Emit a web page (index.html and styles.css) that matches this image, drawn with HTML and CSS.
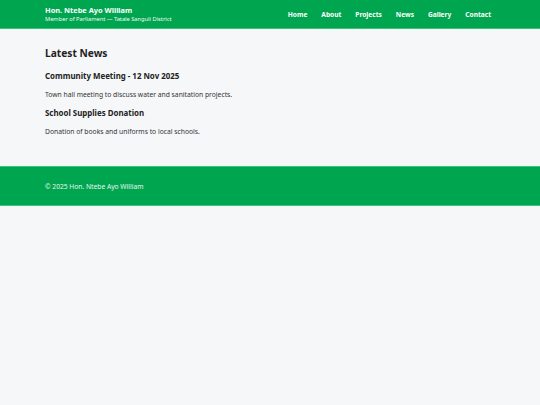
FILE: index.html
```html
<!DOCTYPE html>
<html lang="en">
<head>
<meta charset="utf-8">
<title>Hon. Ntebe Ayo William</title>
<link rel="stylesheet" href="styles.css">
</head>
<body>
<header class="site-header">
  <div class="container header-inner">
    <div class="brand">
      <div class="brand-name">Hon. Ntebe Ayo William</div>
      <div class="brand-sub">Member of Parliament — Tatale Sanguli District</div>
    </div>
    <nav class="nav">
      <a href="#">Home</a>
      <a href="#">About</a>
      <a href="#">Projects</a>
      <a href="#">News</a>
      <a href="#">Gallery</a>
      <a href="#">Contact</a>
    </nav>
  </div>
</header>
<main class="container main">
  <h2 class="section-title">Latest News</h2>
  <article class="news">
    <h3 class="news-title">Community Meeting - 12 Nov 2025</h3>
    <p class="news-text">Town hall meeting to discuss water and sanitation projects.</p>
  </article>
  <article class="news">
    <h3 class="news-title">School Supplies Donation</h3>
    <p class="news-text">Donation of books and uniforms to local schools.</p>
  </article>
</main>
<footer class="site-footer">
  <div class="container">© 2025 Hon. Ntebe Ayo William</div>
</footer>
</body>
</html>
```

FILE: styles.css
```css
* { box-sizing: border-box; }
html, body { margin: 0; padding: 0; }
body {
  background: #f6f7f9;
  color: #222;
  font-family: "Noto Sans", "Open Sans", sans-serif;
}
.container {
  width: 450px;
  margin: 0 auto;
}
.site-header {
  background: #00a54f;
  border-bottom: 1px solid #3cc47a;
  color: #fff;
}
.header-inner {
  display: flex;
  justify-content: space-between;
  align-items: center;
  height: 28px;
}
.brand-name {
  font-weight: 700;
  font-size: 7.4px;
  line-height: 10px;
}
.brand-sub {
  font-size: 5.7px;
  line-height: 8px;
  opacity: 0.95;
}
.nav {
  display: flex;
  gap: 14px;
  padding-right: 4px;
}
.nav a {
  color: #fff;
  text-decoration: none;
  font-weight: 700;
  font-size: 6.6px;
}
.main {
  padding-top: 16px;
  padding-bottom: 22px;
}
.section-title {
  margin: 0 0 9px;
  font-size: 10.2px;
  line-height: 16px;
  font-weight: 700;
}
.news-title {
  margin: 0;
  font-size: 7.9px;
  line-height: 12px;
  font-weight: 700;
}
.news-text {
  margin: 8px 0 7px;
  font-size: 6.75px;
  line-height: 10px;
  color: #333;
}
.site-footer {
  background: #00a54f;
  border-top: 1px solid #3cc47a;
  border-bottom: 1px solid #3cc47a;
  color: #eaf7ef;
  font-size: 6.7px;
  height: 40px;
  display: flex;
  align-items: center;
}
```
